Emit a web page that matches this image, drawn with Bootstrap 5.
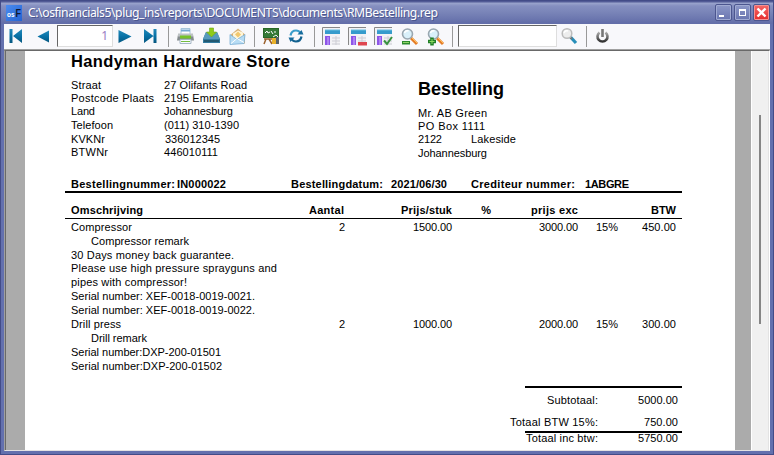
<!DOCTYPE html>
<html lang="nl">
<head>
<meta charset="utf-8">
<title>RMBestelling.rep</title>
<link href="https://cdn.jsdelivr.net/npm/bootstrap@5.3.0/dist/css/bootstrap.min.css" rel="stylesheet">
<style>
body{font-family:"Liberation Sans",Arial,sans-serif;font-size:11px;line-height:14px;color:#000;overflow:hidden}
.win{width:774px;height:455px;background:#6370ae;border:1px solid #434c88;padding:0 3px 3px}
.titlebar{height:23px;background:linear-gradient(#525b96 0,#525b96 1px,#9ba5cd 2px,#858fc0 5px,#7883b7 12px,#636ea9 22px);margin:0 -3px;padding:0 3px 0 5px;color:#fff}
.app{width:16px;height:16px;background:linear-gradient(135deg,#4b8cf0,#2463d2);margin-top:1px}
.caption{font:12.2px/18px "Noto Sans",sans-serif;text-shadow:1px 1px 0 #4b568f;margin-left:6px}
.wbtn{width:17px;height:17px;border:1px solid #4c568f;border-radius:2px;background:linear-gradient(#8d98c8,#6975b0);box-shadow:inset 0 0 0 1px #a0aad2;margin-left:2px}
.wclose{background:linear-gradient(#f56969,#e42c2c);box-shadow:inset 0 0 0 1px #f49191}
.tools{height:26px;background:#f8f8fb;border-bottom:1px solid #a0a0a0}
.tools svg{flex:none;display:block}
.field{height:22px;background:#fff;border:1px solid #dedede;border-top-color:#666;border-left-color:#666;color:#9a7cc4;font:12px/19px "Noto Sans",sans-serif;margin-top:1px}
.pageno{width:56px;margin-left:53px}
.query{width:99px;margin-left:5px}
.rule-v{width:1px;height:21px;background:#999;margin-top:2px}
.view{height:401px;border:1px solid #fff;border-top-color:#696969;border-left-color:#a0a0a0;border-bottom-color:#e3e3e3;background:#ababab;box-shadow:inset 1px 0 #696969;overflow:hidden}
.sheet{width:710px;background:#fff;margin-left:20px;padding-left:40px}
.scroller{width:18px;background:#f0f0f0;border-left:1px solid #fff;border-right:1px solid #e3e3e3;margin-left:16px}
.thumb{width:2px;height:209px;background:#858585;margin:64px 0 0 7px}
.f{white-space:pre;display:inline-block}
.store{font-size:16.5px;line-height:20px;height:27px;padding-left:6px;font-weight:700}
.party{height:99px;padding-left:6px;grid-template-columns:93px 254px 1fr}
.r1{display:grid;grid-template-rows:13px 13px 14px 14px 13px 14px;align-content:start}
.addr{display:grid;grid-template-rows:28px 13px 13px 14px 14px;align-content:start}
.doctitle{font-size:18px;line-height:22px;font-weight:700}
.nudge{margin-left:1px}
.nudge-y{padding-top:1px;line-height:13px}
.town{margin-left:29px}
.refs{width:617px;height:16px;padding-left:6px;border-bottom:2px solid #000;font-weight:700;grid-template-columns:106px 114px 100px 80px 114px 1fr}
.cols{display:grid;width:617px;padding-left:6px;grid-template-columns:199px 75px 107px 39px 87px 40px 58px;height:14px}
.cols .e{text-align:right}
.heads{height:26px;padding-top:10px;border-bottom:1px solid #000;margin-bottom:1px;font-weight:700}
.heads .qty{padding-right:1px}
.note{height:14px;padding-left:6px}
.tight{height:13px}
.in20{padding-left:26px}
.sums{width:172px;margin:13px 0 0 445px}
.line2{height:2px;background:#000;margin-left:15px}
.sumrow{height:14px;padding-right:4px}
.sumrow .amt{width:80px;text-align:right}
.s1{margin-top:5px}
.s2{margin:8px 0 2px}
.s3{margin-top:-2px}
</style>
<script src="https://cdn.jsdelivr.net/npm/bootstrap@5.3.0/dist/js/bootstrap.bundle.min.js"></script>
</head>
<body>
<div class="win d-flex flex-column">
<header class="titlebar d-flex align-items-center flex-shrink-0">
 <svg class="app" viewBox="0 0 16 16"><text x="1" y="11.500" font-family="Liberation Sans" font-size="8" font-weight="700" fill="#fff" textLength="7.500" lengthAdjust="spacingAndGlyphs">os</text><text x="9.500" y="12" font-family="Liberation Sans" font-size="11" font-weight="700" fill="#101830" textLength="5.500" lengthAdjust="spacingAndGlyphs">F</text></svg>
 <span class="caption f" data-w="410">C:\osfinancials5\plug_ins\reports\DOCUMENTS\documents\RMBestelling.rep</span>
 <svg class="wbtn ms-auto" viewBox="0 0 15 15"><path d="M3 10h5v2H3z" fill="#fff"/></svg>
 <svg class="wbtn" viewBox="0 0 15 15"><path d="M4 4h7v7H4zM5 6v4h5V6z" fill="#fff" fill-rule="evenodd"/></svg>
 <svg class="wbtn wclose" viewBox="0 0 15 15"><path d="M3.500 3.500l8 8M11.500 3.500l-8 8" stroke="#fff" stroke-width="2.400"/></svg>
</header>
<nav class="tools d-flex align-items-start flex-shrink-0">
 <svg width="766" height="25" viewBox="4 24 766 25" class="position-absolute pe-none">
  <defs>
   <linearGradient id="bl" x2="0" y2="1"><stop stop-color="#2389b9"/><stop offset=".5" stop-color="#0871a6"/><stop offset="1" stop-color="#07577f"/></linearGradient>
   <linearGradient id="gy" x2="0" y2="1"><stop stop-color="#aaa"/><stop offset="1" stop-color="#333"/></linearGradient>
   <g id="tbl"><path d="M1 1h17v17H1z" fill="#f2f2f5"/><path d="M.5 18V.5H18" fill="none" stroke="#888"/><path d="M3 3h15v4H3z" fill="#369bcc"/><path d="M3 2.500h15v1H3z" fill="#68bee0"/><path d="M3 9h5v9H3z" fill="#8e55e8"/><path d="M5 10h2v8H5z" fill="#ae83f4"/><path d="M10 11h8M10 14h8M10 17h8M14 9v9" stroke="#cdcdd5"/></g>
   <g id="mag"><path d="M10 10l6 6" stroke="#e47b27" stroke-width="3"/><path d="M11 10l5 5" stroke="#ffc05a"/><circle cx="6.500" cy="6" r="5" fill="#d9f0fa" stroke="#9aa7b0" stroke-width="1.600"/><path d="M3.500 5q1-3 4-2" fill="none" stroke="#fff" stroke-width="1.500"/></g>
  </defs>
  <g fill="url(#bl)"><path d="M9.500 29h3v14h-3zM22 29v14l-9-7z"/><path d="M49 30.500v12l-11.500-6z"/><path d="M118.500 30v13l13-6.500z"/><path d="M153.500 29h3v14h-3zM144 29v14l9.500-7z"/></g>
  <g transform="translate(177 28.500)"><path d="M4 0h9v6H4z" fill="#fff" stroke="#a8c5da"/><path d="M4 1h9v2H4z" fill="#75aad2"/><path d="M1 6h15l1 6H0z" fill="#858b8e"/><path d="M1 5h15v3H1z" fill="#bcc1c3"/><path d="M3 7h11v3H3z" fill="#75c329"/><path d="M3 11h11v4H3z" fill="#f8fcff" stroke="#a4b5c4"/><path d="M4 13h9" stroke="#76bd3e"/></g>
  <g transform="translate(203 28)"><path d="M3 4h11l3 7v4H0v-4z" fill="#327ba0"/><path d="M3 4h11l3 7H0z" fill="#579abc"/><path d="M1 13h15" stroke="#225871" stroke-width="2"/><path d="M6.500 0h4v4h3L8.500 9l-5-5h3z" fill="#8fcb18" stroke="#6ba518" stroke-width=".6"/></g>
  <g transform="translate(230 28.500)"><path d="M1 6l7-6 7 6v9H1z" fill="#dab278"/><path d="M3 5l5-3 5 2v7H3z" fill="#fff5d8"/><path d="M8 3l3 3-3 3-3-3z" fill="#f2c86f"/><path d="M0 6l7 5 8-5-1 9-14 1z" fill="#b7dcf4" stroke="#78aed7" stroke-width=".8"/><path d="M1 15l6-5 7 4" fill="none" stroke="#fff"/></g>
  <g transform="translate(263 28)"><path d="M0 0h16v10H0z" fill="#286827"/><path d="M1 1h14v8H1z" fill="#347936"/><path d="M2 5l2-2 1 2 2-1M8 3l2 3M11 4h2" stroke="#fff" fill="none"/><path d="M1 11h9M3 11l-2 5M6 11l3 5" stroke="#9a602c" stroke-width="1.500"/><path d="M9 10h4v6H9z" fill="#e9b22c"/><path d="M13 9h3v7h-3z" fill="#57636b"/><path d="M10 9l3-2 2 2" fill="none" stroke="#eee"/></g>
  <g transform="translate(289 29)"><path d="M1.500 6.500Q2.500 1.500 7 1.500Q10 1.500 11.500 4" fill="none" stroke="#3a9dcb" stroke-width="2.200"/><path d="M8.500 5.500h6L12.500 1z" fill="#176c9e"/><path d="M12.500 7.500Q11.500 12.500 7 12.500Q4 12.500 2.500 10" fill="none" stroke="#12618f" stroke-width="2.200"/><path d="M5.500 8.500h-6L1.500 13z" fill="#176c9e"/></g>
  <use href="#tbl" x="322" y="27"/><use href="#tbl" x="348" y="27"/><path d="M358 42h9v3.500h-9z" fill="#df4650"/><use href="#tbl" x="374" y="27"/><path d="M384 40.500l3 3.500 5-7" stroke="#38923f" stroke-width="2" fill="none"/>
  <use href="#mag" x="401" y="28"/><path d="M402 41h8v3.500h-8z" fill="#2e8b2e"/><path d="M403 42.500h6" stroke="#8fd466"/>
  <use href="#mag" x="427" y="28"/><path d="M432 37.500v8M428 41.500h8" stroke="#207f27" stroke-width="3.500"/><path d="M432 39v5M429.500 41.500h5" stroke="#8edb62"/>
  <g transform="translate(561 28)"><path d="M9.500 9l5.500 6" stroke="#278eb9" stroke-width="3.200"/><path d="M9 9l2 2" stroke="#777" stroke-width="2"/><circle cx="6" cy="5.500" r="4.800" fill="#ededed" stroke="#bcbcbc" stroke-width="1.500"/><path d="M3 5q1-3 4-2" stroke="#fff" stroke-width="1.500" fill="none"/></g>
  <path d="M599.500 32.500a5 5 0 1 0 6 0" fill="none" stroke="url(#gy)" stroke-width="2.600"/><path d="M602.500 29v8" stroke="#777" stroke-width="2.600"/>
 </svg>
 <div class="field pageno text-end"><span class="pe-1">1</span></div>
 <i class="rule-v" style="margin-left:55px"></i>
 <i class="rule-v" style="margin-left:85px"></i>
 <i class="rule-v" style="margin-left:59px"></i>
 <i class="rule-v" style="margin-left:137px"></i>
 <div class="field query"></div>
 <i class="rule-v" style="margin-left:29px"></i>
</nav>
<main class="view d-flex">
<article class="sheet flex-shrink-0">
 <div class="store"><span class="f" data-w="219">Handyman Hardware Store</span></div>
 <section class="party d-grid">
  <div class="r1"><span class="f" data-w="30">Straat</span><span class="f" data-w="83">Postcode Plaats</span><span class="f" data-w="24">Land</span><span class="f" data-w="42">Telefoon</span><span class="f" data-w="34">KVKNr</span><span class="f" data-w="37">BTWNr</span></div>
  <div class="r1"><span class="f" data-w="83">27 Olifants Road</span><span class="f" data-w="89">2195 Emmarentia</span><span class="f nudge-y" data-w="69">Johannesburg</span><span class="f" data-w="75">(011) 310-1390</span><span class="f nudge" data-w="55">336012345</span><span class="f" data-w="54">446010111</span></div>
  <div class="addr"><span class="f doctitle" data-w="86">Bestelling</span><span class="f" data-w="69">Mr. AB Green</span><span class="f" data-w="67">PO Box 1111</span><span class="d-flex"><span class="f" data-w="24">2122</span><span class="f town" data-w="45">Lakeside</span></span><span class="f" data-w="69">Johannesburg</span></div>
 </section>
 <div class="refs d-grid"><span class="f" data-w="104">Bestellingnummer:</span><span class="f" data-w="49">IN000022</span><span class="f" data-w="92">Bestellingdatum:</span><span class="f" data-w="56">2021/06/30</span><span class="f" data-w="104">Crediteur nummer:</span><span class="f" data-w="44">1ABGRE</span></div>
 <div class="cols heads"><b class="f" data-w="72">Omschrijving</b><b class="e qty"><span class="f" data-w="35">Aantal</span></b><b class="e"><span class="f" data-w="51">Prijs/stuk</span></b><b class="e">%</b><b class="e"><span class="f" data-w="47">prijs exc</span></b><b></b><b class="e"><span class="f" data-w="25">BTW</span></b></div>
 <div class="cols"><span class="f" data-w="61">Compressor</span><span class="e">2</span><span class="e"><span class="f" data-w="39">1500.00</span></span><span></span><span class="e"><span class="f" data-w="39">3000.00</span></span><span class="e">15%</span><span class="e"><span class="f" data-w="34">450.00</span></span></div>
 <div class="note in20"><span class="f" data-w="98">Compressor remark</span></div>
 <div class="note tight"><span class="f" data-w="163">30 Days money back guarantee.</span></div>
 <div class="note"><span class="f" data-w="206">Please use high pressure sprayguns and</span></div>
 <div class="note"><span class="f" data-w="116">pipes with compressor!</span></div>
 <div class="note"><span class="f" data-w="184">Serial number: XEF-0018-0019-0021.</span></div>
 <div class="note"><span class="f" data-w="184">Serial number: XEF-0018-0019-0022.</span></div>
 <div class="cols"><span class="f" data-w="50">Drill press</span><span class="e">2</span><span class="e"><span class="f" data-w="39">1000.00</span></span><span></span><span class="e"><span class="f" data-w="39">2000.00</span></span><span class="e">15%</span><span class="e"><span class="f" data-w="34">300.00</span></span></div>
 <div class="note in20"><span class="f" data-w="56">Drill remark</span></div>
 <div class="note"><span class="f" data-w="150">Serial number:DXP-200-01501</span></div>
 <div class="note"><span class="f" data-w="151">Serial number:DXP-200-01502</span></div>
 <section class="sums">
  <div class="line2"></div>
  <div class="sumrow s1 d-flex justify-content-end"><span class="f" data-w="51">Subtotaal:</span><span class="amt"><span class="f" data-w="40">5000.00</span></span></div>
  <div class="sumrow s2 d-flex justify-content-end"><span class="f" data-w="88">Totaal BTW 15%:</span><span class="amt"><span class="f" data-w="34">750.00</span></span></div>
  <div class="line2"></div>
  <div class="sumrow s3 d-flex justify-content-end"><span class="f" data-w="72">Totaal inc btw:</span><span class="amt"><span class="f" data-w="40">5750.00</span></span></div>
 </section>
</article>
<div class="scroller flex-shrink-0"><div class="thumb"></div></div>
</main>
</div>
<script>
document.querySelectorAll('[data-w]').forEach(function(e){
  e.style.justifySelf='start';
  var r=document.createRange();r.selectNodeContents(e);
  var w=r.getBoundingClientRect().width,n=e.textContent.length;
  var s=(e.dataset.w-w)/(n-1);
  e.style.letterSpacing=s+'px';
  e.style.marginRight=-s+'px';
});
</script>
</body>
</html>
